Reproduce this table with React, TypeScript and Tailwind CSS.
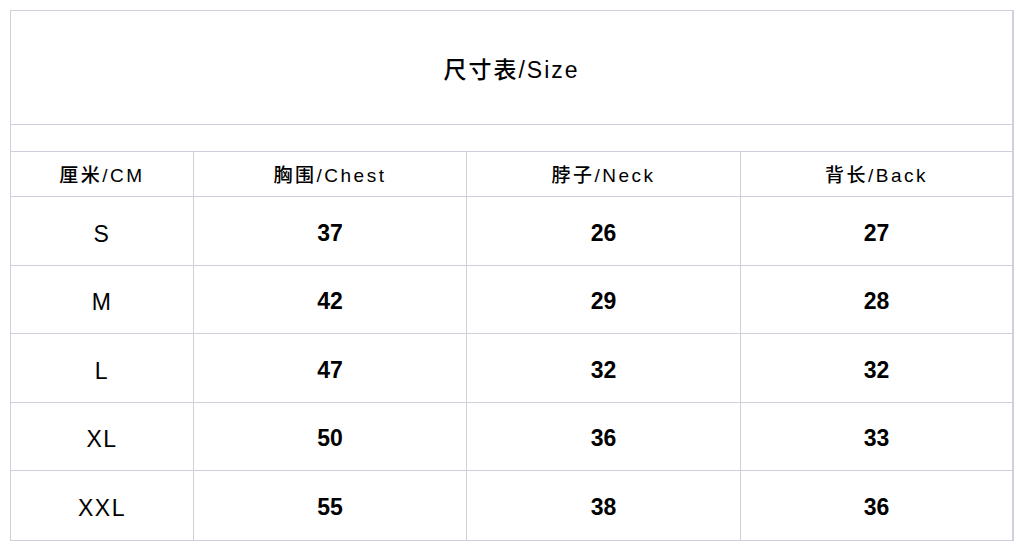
const rows = [
  { size: "S", chest: 37, neck: 26, back: 27 },
  { size: "M", chest: 42, neck: 29, back: 28 },
  { size: "L", chest: 47, neck: 32, back: 32 },
  { size: "XL", chest: 50, neck: 36, back: 33 },
  { size: "XXL", chest: 55, neck: 38, back: 36 },
];

const cell = "border-r border-[#cfd0dc] flex items-center justify-center";

export default function App() {
  return (
    <div className="w-[1024px] h-[549px] bg-white pt-[10px] pl-[10px] font-['Liberation_Sans','Noto_Sans_CJK_SC',sans-serif] text-black">
      <div className="w-[1004px] border border-[#cfd0dc] border-r-2">
        <div className="h-[114px] flex items-center justify-center pt-[6px] border-b border-[#cfd0dc] text-[23px] font-medium tracking-[2px]">
          尺寸表/Size
        </div>
        <div className="h-[27px] border-b border-[#cfd0dc]" />
        <div className="h-[45px] flex border-b border-[#cfd0dc] text-[19px] font-medium tracking-[2.5px]">
          <div className={`${cell} w-[183px] pt-[5px]`}>厘米/CM</div>
          <div className={`${cell} w-[273px] pt-[5px]`}>胸围/Chest</div>
          <div className={`${cell} w-[274px] pt-[5px]`}>脖子/Neck</div>
          <div className="flex-1 flex items-center justify-center pt-[5px]">背长/Back</div>
        </div>
        {rows.map((r, i) => (
          <div key={r.size} className={`h-[68.6px] flex text-[23px] ${i < rows.length - 1 ? "border-b border-[#cfd0dc]" : ""}`}>
            <div className={`${cell} w-[183px] pt-[6px] tracking-[1.5px]`}>{r.size}</div>
            <div className={`${cell} w-[273px] pt-[4px] font-bold`}>{r.chest}</div>
            <div className={`${cell} w-[274px] pt-[4px] font-bold`}>{r.neck}</div>
            <div className="flex-1 flex items-center justify-center pt-[4px] font-bold">{r.back}</div>
          </div>
        ))}
      </div>
    </div>
  );
}
